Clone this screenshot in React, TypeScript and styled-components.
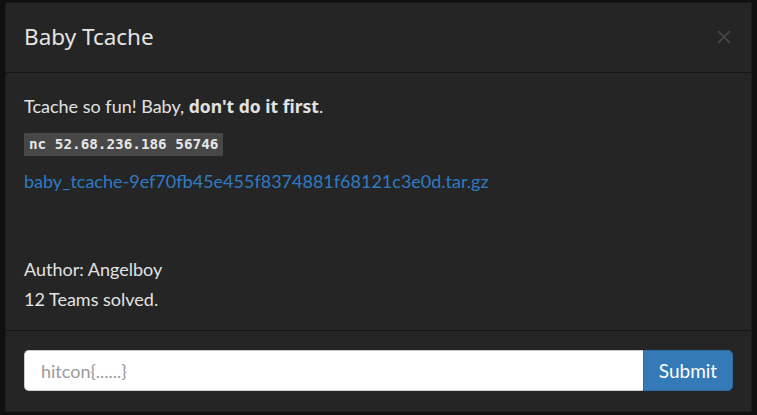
import styled, { createGlobalStyle } from "styled-components";

const GlobalStyle = createGlobalStyle`
  html, body {
    margin: 0;
    padding: 0;
    background: #111111;
    font-family: Lato, "Noto Sans", sans-serif;
  }
`

const Backdrop = styled.div`
  width: 757px;
  height: 415px;
  box-sizing: border-box;
  padding: 2px 5px 3px 5px;
  background: #101010;
  overflow: hidden;
`

const Modal = styled.div`
  height: 410px;
  box-sizing: border-box;
  background: #252525;
  border: 1px solid #1b1b1b;
  border-radius: 1px;
  display: flex;
  flex-direction: column;
`

const Header = styled.div`
  height: 70px;
  box-sizing: border-box;
  border-bottom: 1px solid #161616;
  padding: 0 18px 2px 18px;
  display: flex;
  align-items: center;
  justify-content: space-between;
`

const Title = styled.h4`
  margin: 0;
  font-family: "Noto Sans", sans-serif;
  font-weight: 400;
  font-size: 22.5px;
  color: #e4e4e4;
`

const Close = styled.button`
  border: 0;
  background: none;
  padding: 0;
  margin-right: 2px;
  width: 14px;
  height: 14px;
  display: flex;
  cursor: pointer;
`

const Body = styled.div`
  flex: 1;
  padding: 18px 18px 0 18px;
  border-bottom: 1px solid #161616;
  color: #e2e2e2;
  font-size: 18px;
`

const Line = styled.p<{ $gap?: number }>`
  margin: ${p => p.$gap ?? 0}px 0 0 0;
  line-height: 30px;
`

const Strong = styled.b`
  font-family: "Noto Sans", sans-serif;
  font-weight: 700;
  font-size: 17.5px;
`

const Code = styled.code`
  display: inline-block;
  margin-top: 12px;
  padding: 0 5px;
  height: 23px;
  line-height: 23px;
  background: #474747;
  color: #e6e6e6;
  font-family: "DejaVu Sans Mono", monospace;
  font-weight: 700;
  font-size: 14.3px;
  border-radius: 1px;
`

const Link = styled.a`
  display: block;
  margin-top: 10px;
  line-height: 30px;
  color: #2e7bc4;
  text-decoration: none;
`

const Footer = styled.form`
  height: 80px;
  box-sizing: border-box;
  padding: 19px 18px 0 18px;
  display: flex;
`

const Input = styled.input`
  flex: 1;
  height: 41px;
  box-sizing: border-box;
  border: 1px solid #cccccc;
  border-right: 0;
  border-radius: 5px 0 0 5px;
  padding: 0 16px;
  font-family: Lato, sans-serif;
  font-size: 18px;
  background: #ffffff;
  outline: none;
  &::placeholder {
    color: #9a9a9a;
  }
`

const SubmitButton = styled.button`
  width: 90px;
  height: 41px;
  border: 1px solid #2e6da4;
  border-radius: 0 5px 5px 0;
  background: #337ab7;
  color: #ffffff;
  font-family: Lato, sans-serif;
  font-size: 19px;
  cursor: pointer;
`

export default function App() {
  return (
    <Backdrop>
      <GlobalStyle />
      <Modal>
        <Header>
          <Title>Baby Tcache</Title>
          <Close aria-label="Close">
            <svg width="14" height="14" viewBox="0 0 14 14">
              <path d="M1 1 L13 13 M13 1 L1 13" stroke="#4b4b4b" strokeWidth="1.6" />
            </svg>
          </Close>
        </Header>
        <Body>
          <Line>
            Tcache so fun! Baby, <Strong>don't do it first</Strong>.
          </Line>
          <Code>nc 52.68.236.186 56746</Code>
          <Link href="#">baby_tcache-9ef70fb45e455f8374881f68121c3e0d.tar.gz</Link>
          <Line $gap={58}>Author: Angelboy</Line>
          <Line>12 Teams solved.</Line>
        </Body>
        <Footer onSubmit={e => e.preventDefault()}>
          <Input placeholder="hitcon{......}" />
          <SubmitButton type="submit">Submit</SubmitButton>
        </Footer>
      </Modal>
    </Backdrop>
  )
}
